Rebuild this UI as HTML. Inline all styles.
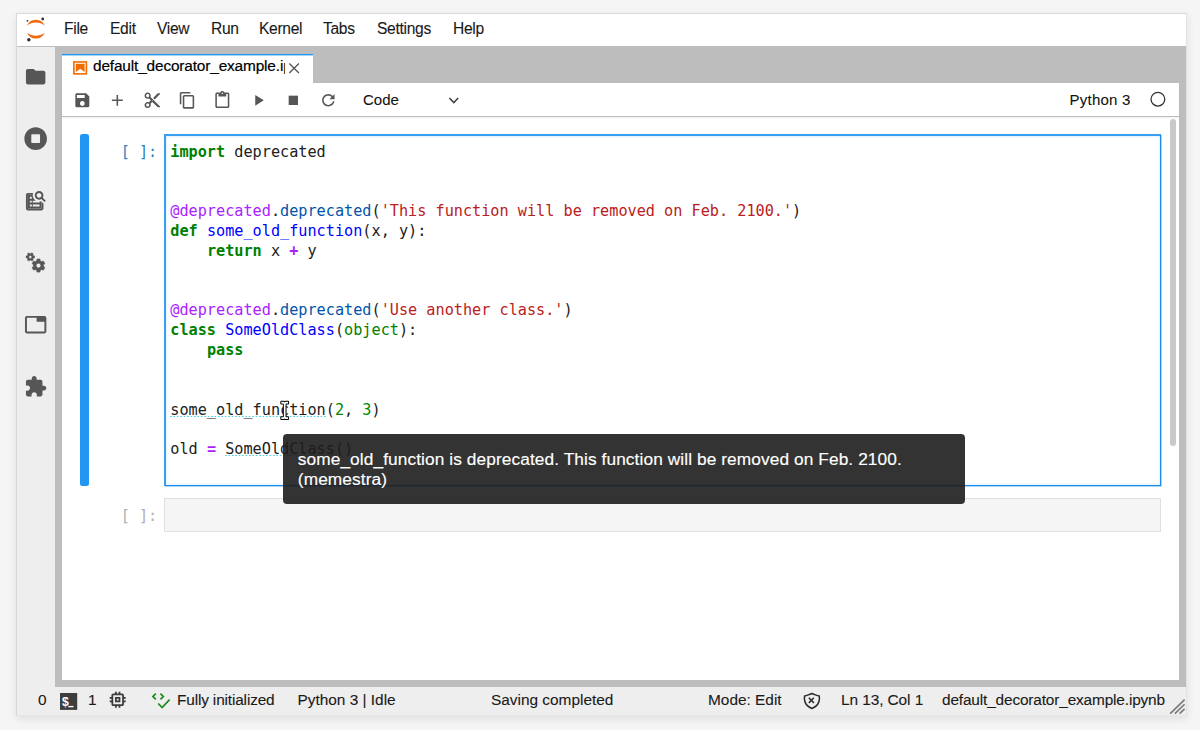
<!DOCTYPE html>
<html><head><meta charset="utf-8"><title>JupyterLab</title>
<style>
html,body{margin:0;padding:0;}
body{width:1200px;height:730px;overflow:hidden;background:#f5f5f5;position:relative;font-family:"Liberation Sans",sans-serif;font-size:15px;color:#212121;}
.abs,svg.ic{position:absolute;}
svg.ic{overflow:visible;}
#frame{left:16px;top:13px;width:1171px;height:703px;box-sizing:border-box;border:1px solid #d9d9d9;border-right-color:#e3e3e3;border-bottom-color:#e6e6e6;background:#fff;box-shadow:0 3px 8px rgba(0,0,0,0.09);}
#menubar{left:17px;top:14px;width:1169px;height:32px;background:#fff;border-bottom:1px solid #bdbdbd;}
.mi{position:absolute;top:19.8px;line-height:18px;font-size:15.6px;letter-spacing:-0.3px;color:#1a1a1a;-webkit-text-stroke:0.1px #1a1a1a;white-space:nowrap;}
#sidebar{left:17px;top:47px;width:38px;height:640px;background:#eeeeee;}
#dock{left:55px;top:47px;width:1131px;height:640px;background:#bdbdbd;}
#statusbar{left:17px;top:687px;width:1169px;height:28px;background:#eeeeee;}
.st{position:absolute;top:691px;line-height:18px;font-size:15.4px;letter-spacing:0;color:#1a1a1a;-webkit-text-stroke:0.1px #1a1a1a;white-space:nowrap;}
#tab{left:62px;top:54px;width:251px;height:30px;background:#fff;border-top:1px solid #2196f3;box-sizing:border-box;box-shadow:inset 0 1px 0 rgba(33,150,243,0.4);}
#tablabel{left:93px;top:57px;width:192px;height:20px;line-height:18px;overflow:hidden;white-space:nowrap;font-size:15.4px;letter-spacing:-0.15px;color:#000;-webkit-text-stroke:0.2px #000;}
#panel{left:62px;top:83px;width:1117px;height:597px;background:#fff;}
#toolbar{left:62px;top:83px;width:1117px;height:33px;border-bottom:1px solid #bdbdbd;background:#fff;box-shadow:0 1px 2px rgba(0,0,0,0.07);}
.tbtxt{position:absolute;top:91px;line-height:18px;font-size:15px;color:#111;-webkit-text-stroke:0.08px #111;white-space:nowrap;}
/* cells */
#collapser{left:80px;top:134.2px;width:9.2px;height:351.4px;background:#2196f3;border-radius:2.3px;}
#editor1{left:164px;top:134px;width:997px;height:352px;box-sizing:border-box;border-style:solid;border-width:2px 1px 1px 2px;border-color:#3a9ef3 #1e8ceb #1e8ceb #3a9ef3;background:#fff;box-shadow:1px 1px 0 rgba(33,150,243,0.4),inset 0 0 2px 0.5px rgba(100,181,246,0.3);}
#editor2{left:164px;top:497.6px;width:997.3px;height:34.2px;box-sizing:border-box;border:1.17px solid #e0e0e0;background:#f5f5f5;}
.prompt{position:absolute;left:120.7px;font-family:"DejaVu Sans Mono","Liberation Mono",monospace;font-size:15.1667px;line-height:19.8333px;white-space:pre;}
#code{left:170.3px;top:142.8px;font-family:"DejaVu Sans Mono","Liberation Mono",monospace;font-size:15.2px;line-height:19.8333px;color:#212121;white-space:pre;margin:0;}
#code div{height:19.8333px;}
.k{color:#008000;font-weight:bold;}
.d{color:#0000ff;}
.o{color:#aa22ff;font-weight:bold;}
.m{color:#aa22ff;}
.p{color:#0055aa;}
.s{color:#ba2121;}
.b{color:#008000;}
.n{color:#008800;}
.u{background-image:linear-gradient(90deg,rgba(38,198,218,0.8) 0,rgba(38,198,218,0.8) 1.75px,transparent 1.75px,transparent 3.43px);background-size:3.43px 1px;background-repeat:repeat-x;background-position:0 15px;}
#scroll{left:1170.2px;top:119.3px;width:6px;height:326.4px;border-radius:3px;background:#c9c9c9;}
#tooltip{left:283.2px;top:434px;width:681.6px;height:69.5px;border-radius:4px;background:rgba(29,29,29,0.9);}
#tiptext{left:297.8px;top:448.9px;font-size:17.3px;letter-spacing:0.09px;line-height:20.1px;color:#fff;-webkit-text-stroke:0.15px #fff;white-space:nowrap;}
</style></head><body>
<div id="frame" class="abs"></div>
<div id="menubar" class="abs"></div>
<div id="sidebar" class="abs"></div>
<div id="dock" class="abs"></div>
<div id="tab" class="abs"></div>
<div id="panel" class="abs"></div>
<div id="toolbar" class="abs"></div>
<div id="statusbar" class="abs"></div>
<!--MENU-->
<span class="mi" style="left:64px">File</span>
<span class="mi" style="left:110px">Edit</span>
<span class="mi" style="left:157px">View</span>
<span class="mi" style="left:211px">Run</span>
<span class="mi" style="left:259px">Kernel</span>
<span class="mi" style="left:323px">Tabs</span>
<span class="mi" style="left:377px">Settings</span>
<span class="mi" style="left:453px">Help</span>
<svg class="ic" style="left:0;top:0" width="60" height="50" viewBox="0 0 60 50">
<path fill="#f1690c" d="M27.0 25.8A9.45 9.45 0 0 1 44.7 25.8A13.5 13.5 0 0 0 27.0 25.8Z"/>
<path fill="#f1690c" d="M27.0 32.4A9.45 9.45 0 0 0 44.7 32.4A13.5 13.5 0 0 1 27.0 32.4Z"/>
<circle cx="42.7" cy="19" r="1.4" fill="#333"/><circle cx="27.45" cy="20.85" r="0.9" fill="#333"/><circle cx="28.85" cy="39.7" r="1.8" fill="#333"/>
</svg>
<svg class="ic" style="left:24.04px;top:65.24px" width="23.33" height="23.33" viewBox="0 0 24 24" ><path fill="#565656" d="M10 4H4c-1.1 0-1.99.9-1.99 2L2 18c0 1.1.9 2 2 2h16c1.1 0 2-.9 2-2V8c0-1.1-.9-2-2-2h-8l-2-2z"/></svg>
<svg class="ic" style="left:24.04px;top:127.34px" width="23.33" height="23.33" viewBox="0 0 512 512" ><path fill="#565656" d="M256 8C119 8 8 119 8 256s111 248 248 248 248-111 248-248S393 8 256 8zm96 328c0 8.800-7.200 16-16 16H176c-8.800 0-16-7.200-16-16V176c0-8.800 7.200-16 16-16h160c8.800 0 16 7.200 16 16v160z"/></svg>
<svg class="ic" style="left:24.04px;top:189.34px" width="23.33" height="23.33" viewBox="0 0 24 24" ><g fill="#565656"><path d="M18 13V20H4V6H9.020C9.070 5.290 9.240 4.620 9.500 4H4C2.900 4 2 4.900 2 6V20C2 21.100 2.900 22 4 22H18C19.100 22 20 21.100 20 20V15L18 13ZM19.300 8.890C19.740 8.190 20 7.380 20 6.500C20 4.010 17.990 2 15.500 2C13.010 2 11 4.010 11 6.500C11 8.990 13.010 11 15.490 11C16.370 11 17.190 10.740 17.880 10.300L21 13.420L22.420 12L19.300 8.890ZM15.500 9C14.120 9 13 7.880 13 6.500C13 5.120 14.120 4 15.500 4C16.880 4 18 5.120 18 6.500C18 7.880 16.880 9 15.500 9Z"/><path fill-rule="evenodd" clip-rule="evenodd" d="M4 6H9.019C9.006 6.165 9 6.332 9 6.500C9 8.816 10.211 10.849 12.034 12H9V14H16V12.981C16.570 12.938 17.120 12.821 17.640 12.640L18 13V20H4V6ZM8 8H6V10H8V8ZM6 12H8V14H6V12ZM8 16H6V18H8V16ZM9 16H16V18H9V16Z"/></g></svg>
<svg class="ic" style="left:24.04px;top:251.34px" width="23.33" height="23.33" viewBox="0 0 24 24" ><path fill="#565656" fill-rule="evenodd" stroke="#565656" stroke-width="0.6" stroke-linejoin="round" d="M16.64 20.01L16.48 21.72L13.32 21.72L13.16 20.01L11.44 19.01L9.87 19.72L8.29 16.99L9.69 15.99L9.69 14.01L8.29 13.01L9.87 10.28L11.44 10.99L13.16 9.99L13.32 8.28L16.48 8.28L16.64 9.99L18.36 10.99L19.93 10.28L21.51 13.01L20.11 14.01L20.11 15.99L21.51 16.99L19.93 19.72L18.36 19.01ZM17.35 15.00A2.45 2.45 0 1 0 12.45 15.00A2.45 2.45 0 1 0 17.35 15.00Z"/><path fill="#565656" fill-rule="evenodd" stroke="#565656" stroke-width="0.5" stroke-linejoin="round" d="M9.68 4.99L10.85 5.07L10.85 7.11L9.68 7.19L9.06 8.28L9.57 9.33L7.81 10.35L7.15 9.38L5.89 9.38L5.23 10.35L3.47 9.33L3.98 8.28L3.36 7.19L2.19 7.11L2.19 5.07L3.36 4.99L3.98 3.90L3.47 2.85L5.23 1.83L5.89 2.80L7.15 2.80L7.81 1.83L9.57 2.85L9.06 3.90ZM8.09 6.09A1.57 1.57 0 1 0 4.95 6.09A1.57 1.57 0 1 0 8.09 6.09Z"/></svg>
<svg class="ic" style="left:24.04px;top:313.33px" width="23.33" height="23.33" viewBox="0 0 24 24" ><path fill="#565656" d="M21 3H3c-1.100 0-2 .900-2 2v14c0 1.100.900 2 2 2h18c1.100 0 2-.900 2-2V5c0-1.100-.900-2-2-2zm0 16H3V5h10v4h8v10z"/></svg>
<svg class="ic" style="left:24.04px;top:375.33px" width="23.33" height="23.33" viewBox="0 0 24 24" ><path fill="#565656" d="M20.500 11H19V7c0-1.100-.900-2-2-2h-4V3.500C13 2.120 11.880 1 10.500 1S8 2.120 8 3.500V5H4c-1.100 0-1.990.900-1.990 2v3.800H3.500c1.490 0 2.700 1.210 2.700 2.700s-1.210 2.700-2.700 2.700H2V20c0 1.100.900 2 2 2h3.800v-1.500c0-1.490 1.210-2.700 2.700-2.700 1.490 0 2.700 1.210 2.700 2.700V22H17c1.100 0 2-.900 2-2v-4h1.500c1.380 0 2.500-1.120 2.500-2.500S21.880 11 20.500 11z"/></svg>
<svg class="ic" style="left:70px;top:58px" width="20" height="20" viewBox="70 58 20 20"><rect x="73.900" y="61.900" width="12.500" height="12" fill="none" stroke="#ef6c00" stroke-width="1.600"/><path fill="#ef6c00" d="M75.800 63.800H84.600V72.100L80.200 68.700L75.800 72.100Z"/></svg>
<svg class="ic" style="left:284px;top:58px" width="20" height="20" viewBox="0 0 20 20"><path d="M5.300 5.500L14.900 15M14.900 5.500L5.300 15" stroke="#555" stroke-width="1.3" fill="none"/></svg>
<div id="tablabel" class="abs">default_decorator_example.ipynb</div>
<svg class="ic" style="left:73.06px;top:91.26px" width="18.67" height="18.67" viewBox="0 0 24 24" ><path fill="#565656" d="M17 3H5c-1.110 0-2 .900-2 2v14c0 1.100.890 2 2 2h14c1.100 0 2-.900 2-2V7l-4-4zm-5 16c-1.660 0-3-1.340-3-3s1.340-3 3-3 3 1.340 3 3-1.340 3-3 3zm3-10H5V5h10v4z"/></svg>
<svg class="ic" style="left:108.16px;top:91.26px" width="18.67" height="18.67" viewBox="0 0 24 24" ><path fill="#565656" d="M19 13h-6v6h-2v-6H5v-2h6V5h2v6h6v2z"/></svg>
<svg class="ic" style="left:143.27px;top:91.26px" width="18.67" height="18.67" viewBox="0 0 24 24" ><path fill="#565656" d="M9.640 7.640c.230-.500.360-1.050.360-1.640 0-2.210-1.790-4-4-4S2 3.790 2 6s1.790 4 4 4c.590 0 1.140-.130 1.640-.360L10 12l-2.360 2.360C7.140 14.130 6.590 14 6 14c-2.210 0-4 1.790-4 4s1.790 4 4 4 4-1.790 4-4c0-.590-.130-1.140-.360-1.640L12 14l7 7h3v-1L9.640 7.640zM6 8c-1.100 0-2-.890-2-2s.900-2 2-2 2 .890 2 2-.900 2-2 2zm0 12c-1.100 0-2-.890-2-2s.900-2 2-2 2 .890 2 2-.900 2-2 2zm6-7.500c-.280 0-.500-.220-.500-.500s.220-.500.500-.500.500.220.500.500-.220.500-.500.500zM19 3l-6 6 2 2 7-7V3z"/></svg>
<svg class="ic" style="left:178.37px;top:91.26px" width="18.67" height="18.67" viewBox="0 0 18 18" ><path fill="#565656" d="M11.900 1H3.200C2.400 1 1.700 1.700 1.700 2.500v10.200h1.500V2.500h8.700V1zM14.100 3.900h-8c-.8 0-1.500.7-1.500 1.500v10.200c0 .8.700 1.500 1.500 1.500h8c.8 0 1.500-.7 1.500-1.500V5.400c-.1-.8-.7-1.500-1.500-1.500zm0 11.600h-8V5.400h8v10.100z"/></svg>
<svg class="ic" style="left:213.47px;top:91.26px" width="18.67" height="18.67" viewBox="0 0 24 24" ><path fill="#565656" d="M19 2h-4.180C14.400.840 13.300 0 12 0c-1.300 0-2.400.840-2.820 2H5c-1.100 0-2 .900-2 2v16c0 1.100.900 2 2 2h14c1.100 0 2-.900 2-2V4c0-1.100-.900-2-2-2zm-7 0c.550 0 1 .450 1 1s-.450 1-1 1-1-.450-1-1 .450-1 1-1zm7 18H5V4h2v3h10V4h2v16z"/></svg>
<svg class="ic" style="left:248.56px;top:91.26px" width="18.67" height="18.67" viewBox="0 0 24 24" ><path fill="#565656" d="M8 5v14l11-7z"/></svg>
<svg class="ic" style="left:283.67px;top:91.26px" width="18.67" height="18.67" viewBox="0 0 24 24" ><path fill="#565656" d="M6 6h12v12H6z"/></svg>
<svg class="ic" style="left:318.77px;top:91.26px" width="18.67" height="18.67" viewBox="0 0 18 18" ><path fill="#565656" d="M9 13.500c-2.490 0-4.500-2.010-4.500-4.500S6.510 4.500 9 4.500c1.240 0 2.360.520 3.170 1.330L10 8h5V3l-1.760 1.760C12.150 3.680 10.660 3 9 3 5.690 3 3.010 5.690 3.010 9S5.690 15 9 15c2.970 0 5.430-2.160 5.900-5h-1.520c-.460 2-2.240 3.500-4.380 3.500z"/></svg>
<svg class="ic" style="left:445px;top:92px" width="18" height="18" viewBox="0 0 18 18"><path d="M4.400 5.900L8.800 10.600L13.200 5.900" stroke="#424242" stroke-width="1.5" fill="none"/></svg>
<svg class="ic" style="left:1147px;top:89px" width="22" height="22" viewBox="0 0 22 22"><circle cx="10.9" cy="10.2" r="6.85" stroke="#333" stroke-width="1.3" fill="none"/></svg>
<span class="tbtxt" style="left:363px">Code</span>
<span class="tbtxt" style="left:1069.6px;letter-spacing:0.22px">Python 3</span>
<!--CELLS-->
<div id="collapser" class="abs"></div>
<div id="editor1" class="abs"></div>
<div id="editor2" class="abs"></div>
<div class="prompt" style="top:142.8px;color:#307fc1">[ ]:</div>
<div class="prompt" style="top:507px;color:#b0b0b0">[ ]:</div>
<div id="code" class="abs"><div><span class="k">import</span> deprecated</div><div> </div><div> </div><div><span class="m">@deprecated</span>.<span class="p">deprecated</span>(<span class="s">'This function will be removed on Feb. 2100.'</span>)</div><div><span class="k">def</span> <span class="d">some_old_function</span>(x, y):</div><div>    <span class="k">return</span> x <span class="o">+</span> y</div><div> </div><div> </div><div><span class="m">@deprecated</span>.<span class="p">deprecated</span>(<span class="s">'Use another class.'</span>)</div><div><span class="k">class</span> <span class="d">SomeOldClass</span>(<span class="b">object</span>):</div><div>    <span class="k">pass</span></div><div> </div><div> </div><div><span class="u">some_old_function</span>(<span class="n">2</span>, <span class="n">3</span>)</div><div> </div><div>old <span class="o">=</span> <span class="u">SomeOldClass</span>()</div><div> </div></div>
<div id="scroll" class="abs"></div>
<svg class="ic" style="left:270px;top:395px" width="30" height="30" viewBox="270 395 30 30"><path d="M281.300 401.800H283.900L284.700 402.500L285.500 401.800H288.100V403.600H286.200L285.550 404.200V416.700L286.200 417.300H288.100V419.100H285.500L284.700 418.400L283.900 419.100H281.300V417.300H283.200L283.850 416.700V404.200L283.200 403.600H281.300Z" fill="#fff" stroke="#000" stroke-width="2" stroke-linejoin="round" paint-order="stroke"/></svg>
<!--TOOLTIP-->
<div id="tooltip" class="abs"></div>
<div id="tiptext" class="abs">some_old_function is deprecated. This function will be removed on Feb. 2100.<br>(memestra)</div>
<svg class="ic" style="left:59.8px;top:692.8px" width="17.2" height="16.9" viewBox="0 0 17.2 16.9"><rect width="17.2" height="16.9" fill="#3d3d3d"/><text x="1.900" y="13.100" font-family="Liberation Sans,sans-serif" font-weight="bold" font-size="12.200" fill="#fff">$</text><rect x="8.300" y="12.900" width="5.200" height="1.400" fill="#fff"/></svg>
<svg class="ic" style="left:107.40px;top:689.30px" width="21.4" height="21.4" viewBox="0 0 24 24" ><path fill="#3c3c3c" d="M15 9H9v6h6V9zm-2 4h-2v-2h2v2zm8-2V9h-2V7c0-1.100-.900-2-2-2h-2V3h-2v2h-2V3H9v2H7c-1.100 0-2 .900-2 2v2H3v2h2v2H3v2h2v2c0 1.100.900 2 2 2h2v2h2v-2h2v2h2v-2h2c1.100 0 2-.900 2-2v-2h2v-2h-2v-2h2zm-4 6H7V7h10v10z"/></svg>
<svg class="ic" style="left:150px;top:690px" width="24" height="22" viewBox="0 0 24 22"><g stroke="#1b8a1b" stroke-width="1.700" fill="none"><path d="M5.800 3.700L2.900 6.500L5.800 9.300"/><path d="M10.400 3.700L13.300 6.500L10.400 9.300"/><path d="M8.300 13.500L12.100 17.600L19.600 9.700"/></g></svg>
<svg class="ic" style="left:801.10px;top:689.90px" width="21" height="21" viewBox="0 0 25 25" ><g stroke="#2a2a2a" stroke-width="1.800" fill="none"><path transform="translate(3 3)" d="M1.861 11.441C0.826 8.770 0.864 6.058 1.249 4.199C2.482 3.933 4.081 3.403 5.601 2.845C7.235 2.244 8.857 1.582 9.988 1.095C11.060 1.583 12.609 2.244 14.218 2.843C15.750 3.414 17.400 3.953 18.754 4.214C19.136 6.072 19.171 8.777 18.139 11.441C17.030 14.303 14.667 17.184 10 18.935C5.333 17.184 2.970 14.303 1.861 11.441Z"/><path d="M9.316 9.320L15.316 15.320M15.316 9.320L9.316 15.320"/></g></svg>
<svg class="ic" style="left:1167.3px;top:696.4px" width="18" height="18" viewBox="0 0 18 18"><g stroke="#7a7a7a" stroke-width="1.600"><path d="M3.2 17.600L17.600 3.6M7.900 17.600L17.600 8.200M12.600 17.600L17.600 12.800"/></g></svg>
<span class="st" style="left:38px">0</span>
<span class="st" style="left:88px">1</span>
<span class="st" style="left:177px;letter-spacing:-0.15px">Fully initialized</span>
<span class="st" style="left:297.5px">Python 3 | Idle</span>
<span class="st" style="left:491px">Saving completed</span>
<span class="st" style="left:708px">Mode: Edit</span>
<span class="st" style="left:841px;letter-spacing:-0.07px">Ln 13, Col 1</span>
<span class="st" style="left:942px;letter-spacing:-0.15px">default_decorator_example.ipynb</span>
</body></html>
